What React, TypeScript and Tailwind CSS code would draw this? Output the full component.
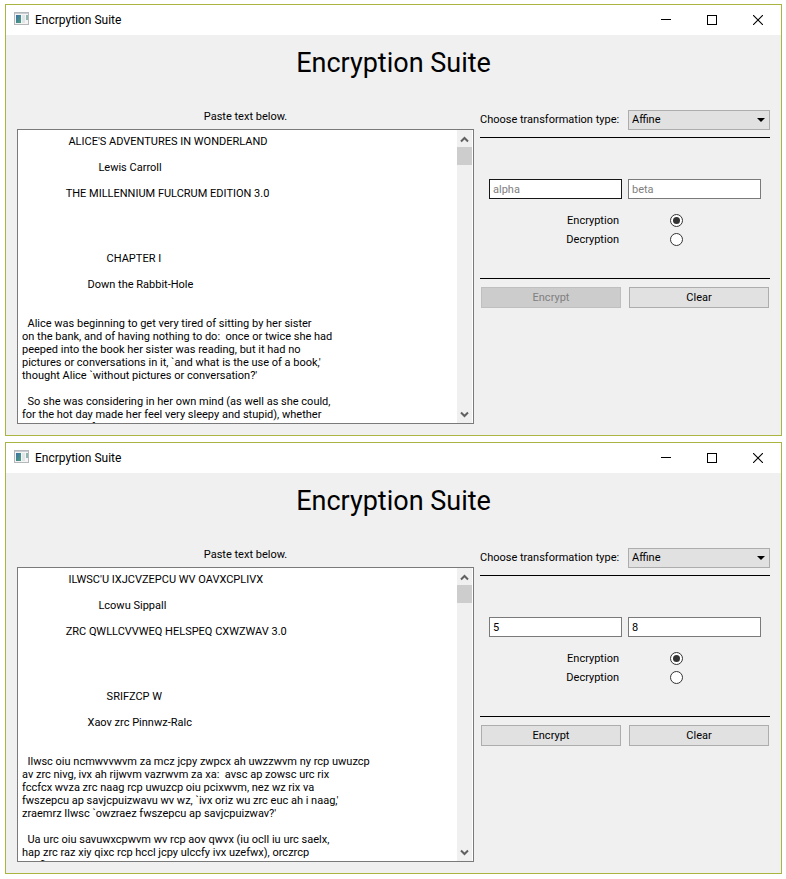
import { useId, useState } from "react";

type WindowProps = {
  initialText: string;
  initialAlpha: string;
  initialBeta: string;
};

const indent = (spaces: number, line: string) => " ".repeat(spaces) + line;

const plainText = [
  indent(17, "ALICE'S ADVENTURES IN WONDERLAND"),
  "",
  indent(28, "Lewis Carroll"),
  "",
  indent(16, "THE MILLENNIUM FULCRUM EDITION 3.0"),
  "",
  "",
  "",
  "",
  indent(31, "CHAPTER I"),
  "",
  indent(24, "Down the Rabbit-Hole"),
  "",
  "",
  "  Alice was beginning to get very tired of sitting by her sister",
  "on the bank, and of having nothing to do:  once or twice she had",
  "peeped into the book her sister was reading, but it had no",
  "pictures or conversations in it, `and what is the use of a book,'",
  "thought Alice `without pictures or conversation?'",
  "",
  "  So she was considering in her own mind (as well as she could,",
  "for the hot day made her feel very sleepy and stupid), whether",
  "the pleasure of making a daisy-chain would be worth the trouble",
].join("\n");

// Affine cipher: x -> alpha * x + beta (mod 26), case is kept
const encrypt = (text: string, alpha: number, beta: number) =>
  text.replace(/[a-z]/gi, (char) => {
    const base = char <= "Z" ? 65 : 97;
    const x = char.charCodeAt(0) - base;
    return String.fromCharCode(((alpha * x + beta) % 26) + base);
  });

const TitleBar = () => (
  <div className="flex h-[30px] items-center bg-white pl-2 text-[12px] leading-4">
    <svg width="15" height="13" viewBox="0 0 15 13" className="mr-1.5 mb-1" aria-hidden="true">
      <defs>
        <linearGradient id="appIcon" x1="0" y1="0" x2="1" y2="1">
          <stop offset="0" stopColor="#3d6fa5" />
          <stop offset="1" stopColor="#4fa07c" />
        </linearGradient>
      </defs>
      <rect x="0.5" y="0.5" width="14" height="12" fill="#f4f4f4" stroke="#b4b8bb" />
      <rect x="1" y="1" width="13" height="1" fill="#c9cdd2" />
      <rect x="2" y="3" width="5" height="8" fill="url(#appIcon)" />
      <rect x="8" y="3" width="3" height="8" fill="#e2e5e8" />
      <rect x="12" y="3" width="2" height="5" fill="#8fb5b0" />
    </svg>
    <span className="flex-1">Encrpytion Suite</span>
    <button type="button" aria-label="Minimize" className="flex h-full w-[46px] items-center justify-center">
      <svg width="10" height="10" shapeRendering="crispEdges">
        <path d="M0 4.5h10" stroke="#000" />
      </svg>
    </button>
    <button type="button" aria-label="Maximize" className="flex h-full w-[46px] items-center justify-center">
      <svg width="10" height="10" shapeRendering="crispEdges">
        <rect x="0.5" y="0.5" width="9" height="9" fill="none" stroke="#000" />
      </svg>
    </button>
    <button type="button" aria-label="Close" className="flex h-full w-[46px] items-center justify-center">
      <svg width="10" height="10">
        <path d="M0 0l10 10M10 0L0 10" stroke="#000" strokeWidth="1.1" />
      </svg>
    </button>
  </div>
);

const ScrollBar = () => (
  <div className="mr-px flex w-[15px] flex-col items-center bg-[#f0f0f0]" aria-hidden="true">
    <svg width="15" height="17">
      <path d="M4 11.5l3.5-3.5L11 11.5" fill="none" stroke="#606060" strokeWidth="2" />
    </svg>
    <div className="h-[18px] w-full bg-[#cdcdcd]" />
    <svg width="15" height="17" className="mt-auto">
      <path d="M4 6.5l3.5 3.5L11 6.5" fill="none" stroke="#606060" strokeWidth="2" />
    </svg>
  </div>
);

const EncryptionWindow = ({ initialText, initialAlpha, initialBeta }: WindowProps) => {
  const id = useId();
  const [text, setText] = useState<string>(initialText);
  const [alpha, setAlpha] = useState<string>(initialAlpha);
  const [beta, setBeta] = useState<string>(initialBeta);
  const [mode, setMode] = useState<string>("Encryption");

  const ready = alpha !== "" && beta !== "";

  const clear = () => {
    setText("");
    setAlpha("");
    setBeta("");
  };

  return (
    <section className="border border-[#a9b441] bg-[#f0f0f0] font-['Roboto',sans-serif] text-[11px] leading-4 text-black">
      <TitleBar />
      <h1 className="text-center text-[27px] leading-[56px]">Encryption Suite</h1>
      <div className="flex gap-1.5 px-[11px] pt-[18px] pb-[11px]">
        <div className="flex min-w-0 flex-1 flex-col gap-1">
          <label htmlFor={`${id}-text`} className="text-center">
            Paste text below.
          </label>
          <div className="flex h-[295px] border border-[#7a7a7a] bg-white">
            <textarea
              id={`${id}-text`}
              value={text}
              onChange={(e) => setText(e.target.value)}
              spellCheck={false}
              className="min-w-0 flex-1 resize-none overflow-hidden px-1 pt-[5px] leading-[13px] outline-none"
            />
            <ScrollBar />
          </div>
        </div>

        <div className="w-[290px] pt-px">
          <div className="flex items-center justify-between">
            <label htmlFor={`${id}-type`} className="whitespace-nowrap">
              Choose transformation type:
            </label>
            <div className="relative w-[142px]">
              <select
                id={`${id}-type`}
                className="block h-5 w-full appearance-none border border-[#adadad] bg-[#e1e1e1] px-[3px] leading-4"
              >
                <option>Affine</option>
              </select>
              <svg width="8" height="4" className="pointer-events-none absolute top-2 right-[5px]">
                <path d="M0 0h8L4 4z" />
              </svg>
            </div>
          </div>
          <hr className="mt-[7px] border-black" />

          <div className="mt-[41px] flex gap-1.5 px-[9px]">
            <input
              type="text"
              aria-label="alpha"
              placeholder="alpha"
              value={alpha}
              onChange={(e) => setAlpha(e.target.value)}
              className={`h-5 min-w-0 flex-1 border bg-white px-[3px] outline-none placeholder:text-[#808080] ${
                ready ? "border-[#7a7a7a]" : "border-[#171717]"
              }`}
            />
            <input
              type="text"
              aria-label="beta"
              placeholder="beta"
              value={beta}
              onChange={(e) => setBeta(e.target.value)}
              className="h-5 min-w-0 flex-1 border border-[#7a7a7a] bg-white px-[3px] outline-none placeholder:text-[#808080]"
            />
          </div>

          <div className="mt-3">
            {["Encryption", "Decryption"].map((name) => (
              <div key={name} className="flex h-[19px] items-center">
                <label htmlFor={`${id}-${name}`} className="w-[139px] text-right">
                  {name}
                </label>
                <input
                  type="radio"
                  id={`${id}-${name}`}
                  name={`${id}-mode`}
                  checked={mode === name}
                  onChange={() => setMode(name)}
                  className="ml-[51px] flex size-[13px] appearance-none items-center justify-center rounded-full border border-[#333] bg-white before:size-[7px] before:rounded-full checked:before:bg-[#333]"
                />
              </div>
            ))}
          </div>

          <hr className="mt-[29px] border-black" />
          <div className="mt-2 flex gap-2 px-px">
            <button
              type="button"
              disabled={!ready}
              onClick={() => setText(encrypt(text, Number(alpha), Number(beta)))}
              className="h-[21px] flex-1 border border-[#adadad] bg-[#e1e1e1] disabled:border-[#bfbfbf] disabled:bg-[#ccc] disabled:text-[#808080]"
            >
              Encrypt
            </button>
            <button
              type="button"
              onClick={clear}
              className="h-[21px] flex-1 border border-[#adadad] bg-[#e1e1e1]"
            >
              Clear
            </button>
          </div>
        </div>
      </div>
    </section>
  );
};

export default function App() {
  return (
    <main className="flex flex-col gap-1.5 bg-white pt-1 pr-1 pb-[5px] pl-[5px]">
      <EncryptionWindow initialText={plainText} initialAlpha="" initialBeta="" />
      <EncryptionWindow initialText={encrypt(plainText, 5, 8)} initialAlpha="5" initialBeta="8" />
    </main>
  );
}
